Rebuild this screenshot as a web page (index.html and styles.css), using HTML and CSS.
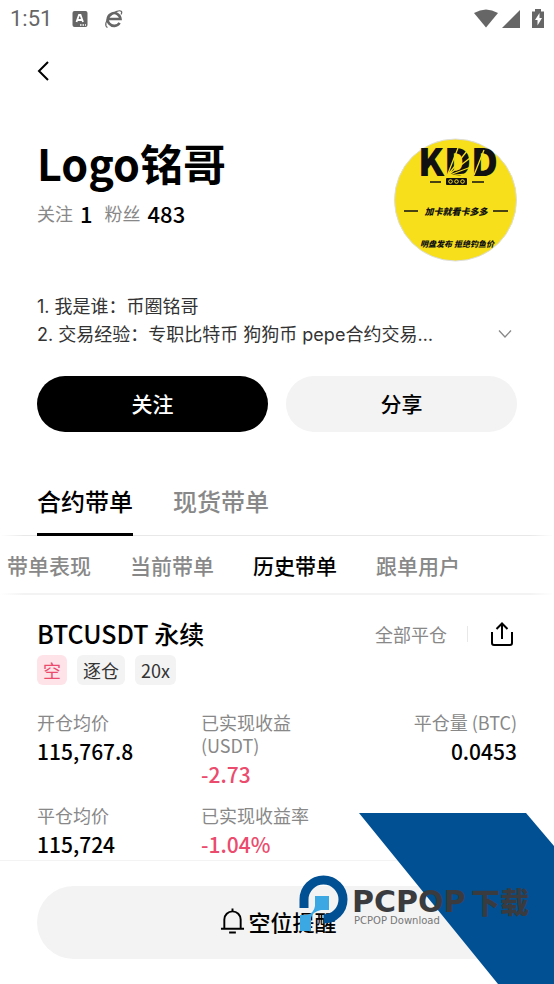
FILE: index.html
```html
<!DOCTYPE html>
<html lang="zh-CN">
<head>
<meta charset="utf-8">
<meta name="viewport" content="width=device-width, initial-scale=1">
<title>Logo铭哥</title>
<link rel="stylesheet" href="styles.css">
</head>
<body>
<div class="status">
  <span class="clock">1:51</span>
  <svg class="status-app" width="16" height="16" viewBox="0 0 16 16"><rect x="0.500" width="15" height="16" rx="2" fill="#666"/><path d="M4.500 11L7 4H8.500L11 11M5.500 9H10" fill="none" stroke="#fff" stroke-width="1.800"/><path d="M8 14h1.500M10.500 14H12M13 14h1" stroke="#fff" stroke-width="1.300"/></svg>
  <svg class="status-browser" width="20" height="20" viewBox="0 0 20 20" fill="none" stroke="#666"><path d="M5 10H16.500A6.400 6.400 0 1 0 15.600 13.800" stroke-width="2.600"/><path d="M3.500 18.500C.5 17 1.500 12 5.500 7.500S15.500.8 17.200 2.200c.8.700.6 2-.2 3.300" stroke-width="1.200"/></svg>
  <svg class="status-system" width="72" height="20" viewBox="0 0 72 20" fill="#666"><path d="M0 4Q12-3 24 4L12 18.500Z"/><path d="M46 1V19H28Z"/><path d="M58 2.500h3V0h6v2.500h3V19H58Z"/><path d="M65.500 4L61 11h2.500v5.500L68 9h-2.500Z" fill="#fff"/></svg>
</div>

<nav class="topbar">
  <button class="icon-button" aria-label="返回"><svg width="14" height="22" viewBox="0 0 14 22" fill="none" stroke="#000" stroke-width="2"><path d="M11 2L2 11L11 20"/></svg></button>
</nav>

<main>
  <header class="profile">
    <div>
      <h1>Logo铭哥</h1>
      <p class="stats"><span>关注</span><strong>1</strong><span>粉丝</span><strong>483</strong></p>
    </div>
    <svg class="avatar" width="123" height="124" viewBox="0 0 123 124">
      <circle cx="61.500" cy="62" r="61" fill="#f7df1b" stroke="#ddd" stroke-width="1"/>
      <text class="avatar-logo" x="64" y="38" text-anchor="middle">KDD</text>
      <path d="M53 38L64 10M53 38L73 13M53 38L76 20M53 38L77 29M53 38L74 36M80 37L90 12" stroke="#f7df1b" stroke-width="1.300"/>
      <path d="M36 44H47M78 44H90M10 73H24M99 73H114" stroke="#111" stroke-width="1.600"/>
      <rect x="52" y="40" width="21" height="7" rx="1" fill="#111"/>
      <g fill="none" stroke="#f7df1b"><circle cx="56.500" cy="43.500" r="1.800"/><circle cx="62.500" cy="43.500" r="1.800"/><circle cx="68.500" cy="43.500" r="1.800"/></g>
      <text class="avatar-line" x="62" y="77" text-anchor="middle">加卡就看卡多多</text>
      <text class="avatar-note" x="26" y="109">明盘发布</text>
      <text class="avatar-note" x="60" y="109">拒绝钓鱼价</text>
    </svg>
  </header>

  <section class="bio">
    <p>1. 我是谁：币圈铭哥<br>2. 交易经验：专职比特币 狗狗币 pepe合约交易…</p>
    <button class="icon-button" aria-label="展开"><svg width="14" height="10" viewBox="0 0 14 10" fill="none" stroke="#888" stroke-width="1.300"><path d="M1 1.500L7 8L13 1.500"/></svg></button>
  </section>

  <div class="actions">
    <button class="pill pill-dark">关注</button>
    <button class="pill">分享</button>
  </div>

  <nav class="tabs">
    <a class="active" href="#futures">合约带单</a>
    <a href="#spot">现货带单</a>
  </nav>
  <nav class="subtabs">
    <a href="#performance">带单表现</a>
    <a href="#current">当前带单</a>
    <a class="active" href="#history">历史带单</a>
    <a href="#followers">跟单用户</a>
  </nav>

  <article class="order">
    <div class="order-head">
      <h2>BTCUSDT 永续</h2>
      <span class="order-state">全部平仓</span>
      <button class="icon-button" aria-label="分享订单"><svg width="24" height="26" viewBox="0 0 24 26" fill="none" stroke="#000" stroke-width="2"><path d="M2 11V22Q2 24 4 24H20Q22 24 22 22V11M12 18V3M6.500 8L12 2.500L17.500 8"/></svg></button>
    </div>
    <div class="tags"><span class="tag tag-short">空</span><span class="tag">逐仓</span><span class="tag">20x</span></div>
    <dl class="figures">
      <div><dt>开仓均价</dt><dd>115,767.8</dd></div>
      <div><dt>已实现收益<br>(USDT)</dt><dd class="loss">-2.73</dd></div>
      <div class="end"><dt>平仓量 (BTC)</dt><dd>0.0453</dd></div>
      <div><dt>平仓均价</dt><dd>115,724</dd></div>
      <div><dt>已实现收益率</dt><dd class="loss">-1.04%</dd></div>
    </dl>
  </article>
</main>

<footer class="bottom">
  <button class="notify"><svg width="25" height="28" viewBox="0 0 26 28" fill="none" stroke="#000" stroke-width="2"><path d="M1 22H25M4.500 22V12.500A8.500 8.500 0 0 1 21.500 12.500V22M13 4V1M9.500 26H16.500"/></svg>空位提醒</button>
  <svg class="brand" width="256" height="171" viewBox="0 0 256 171">
    <path d="M61 0H228L256 33V171H200Z" fill="#005093"/>
    <path d="M6 95V86.500A19.500 19.500 0 1 1 25.500 106" fill="none" stroke="#005093" stroke-width="9"/>
    <path d="M17 83H31V97H23Q14 99 13 105V118H2V102H9Q16 100 17 93Z" fill="#3ba8e4"/>
    <text class="brand-name" x="54" y="99">PCPOP</text>
    <text class="brand-cn" x="173" y="101">下载</text>
    <text class="brand-sub" x="56" y="111">PCPOP Download</text>
  </svg>
</footer>
</body>
</html>
```
FILE: styles.css
```css
* { box-sizing: border-box; }
body {
  margin: 0;
  min-height: 100vh;
  display: flex;
  flex-direction: column;
  background: #fff;
  color: #000;
  font-family: "Noto Sans CJK SC", sans-serif;
  font-size: 18px;
}
h1, h2, p, dl, dd { margin: 0; }
a { color: inherit; text-decoration: none; }
button { border: 0; font: inherit; color: inherit; cursor: pointer; }
svg { display: block; flex: none; overflow: visible; }

.status {
  display: flex;
  align-items: center;
  height: 38px;
  padding: 0 8px 0 10px;
  color: #666;
  font: 400 22px/38px Roboto, sans-serif;
}
.status-app { margin-left: 20px; }
.status-browser { margin-left: 16px; }
.status-system { margin-left: auto; }

.icon-button { display: flex; padding: 0; background: none; }
.topbar { padding: 22px 37px; }

main { flex: 1; }
.profile {
  display: flex;
  justify-content: space-between;
  padding: 34px 37px 0;
}
h1 { font-size: 43px; font-weight: 700; line-height: 48px; }
.stats { display: flex; margin-top: 12px; line-height: 30px; color: #888; }
.stats strong { margin: 0 12px 0 7px; font-size: 22px; font-weight: 500; color: #000; }
.avatar-logo { font-size: 37px; font-weight: 900; fill: #111; }
.avatar-line { font-size: 9px; font-weight: 900; font-style: italic; fill: #111; }
.avatar-note { font-size: 8px; font-weight: 900; font-style: italic; fill: #111; }

.bio {
  display: flex;
  align-items: flex-end;
  justify-content: space-between;
  margin-top: 31px;
  padding: 0 42px 0 37px;
  font-family: Inter, "Noto Sans CJK SC", sans-serif;
  line-height: 28px;
  color: #333;
}
.bio .icon-button { padding-bottom: 10px; }

.actions { display: flex; gap: 18px; padding: 27px 37px 0; }
.pill {
  flex: 1;
  height: 56px;
  padding: 0 0 2px;
  border-radius: 28px;
  background: #f3f3f3;
  font-size: 21px;
  font-weight: 500;
}
.pill-dark { background: #000; color: #fff; }

.tabs, .subtabs { display: flex; color: #888; font-weight: 500; }
.tabs .active, .subtabs .active { color: #000; }
.tabs {
  gap: 40px;
  margin-top: 45px;
  padding: 0 37px;
  font-size: 24px;
  line-height: 48px;
  background: linear-gradient(90deg, #fff, #e8e8e8 24px, #e8e8e8 calc(100% - 24px), #fff) bottom / 100% 1px no-repeat;
}
.tabs a { padding-bottom: 8px; border-bottom: 3px solid transparent; }
.tabs .active { border-color: #000; }
.subtabs {
  gap: 39px;
  padding: 0 7px;
  font-size: 21px;
  line-height: 59px;
  background: linear-gradient(90deg, #fff, #f3f3f3 24px, #f3f3f3 calc(100% - 24px), #fff) bottom / 100% 2px no-repeat;
}

.order { padding: 20px 37px 0; }
.order-head { display: flex; align-items: center; height: 38px; }
h2 { padding-bottom: 2px; font-size: 25px; font-weight: 500; line-height: 36px; }
.order-state {
  margin-left: auto;
  padding-right: 20px;
  color: #888;
  line-height: 16px;
  border-right: 1px solid #e8e8e8;
}
.order-head .icon-button { padding: 0 3px 0 22px; }
.tags { display: flex; gap: 10px; margin-top: 2px; }
.tag {
  padding: 0 6px;
  border-radius: 6px;
  background: #f3f3f3;
  color: #333;
  line-height: 30px;
}
.tag-short { background: #fee3e9; color: #eb4b6d; }
.figures {
  display: grid;
  grid-template-columns: 164fr 158fr 158fr;
  row-gap: 16px;
  margin-top: 26px;
}
dt { color: #888; line-height: 23px; }
dd { margin-top: 3px; font-size: 21px; font-weight: 500; line-height: 28px; }
.end { text-align: right; }
.loss { color: #eb4b6d; }

.bottom {
  position: relative;
  padding: 25px 37px;
  border-top: 1px solid #f3f3f3;
}
.notify {
  display: flex;
  align-items: center;
  justify-content: center;
  gap: 3px;
  width: 100%;
  height: 73px;
  padding: 0 0 3px 3px;
  border-radius: 37px;
  background: #f3f3f3;
  font-size: 22px;
  font-weight: 500;
}
.brand { position: absolute; right: 0; bottom: 0; pointer-events: none; }
.brand-name { font: 700 30px "DejaVu Sans", sans-serif; fill: #393b3e; }
.brand-cn { font-size: 29px; font-weight: 900; fill: #393b3e; }
.brand-sub { font: 10px "DejaVu Sans", sans-serif; fill: #777; }
```
